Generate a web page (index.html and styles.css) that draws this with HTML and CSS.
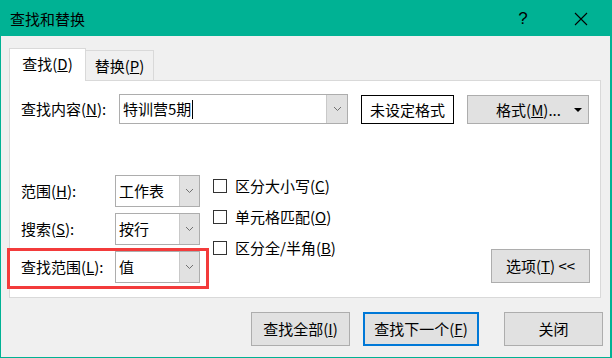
FILE: index.html
```html
<!DOCTYPE html>
<html lang="zh-CN">
<head>
<meta charset="utf-8">
<title>查找和替换</title>
<link rel="stylesheet" href="styles.css">
</head>
<body>
<div class="window">
  <div class="titlebar">
    <span class="title">查找和替换</span>
    <span class="tb-btn help">?</span>
    <span class="tb-btn close">
      <svg width="14" height="14" viewBox="0 0 14 14"><path d="M1 1 L13 13 M13 1 L1 13" stroke="#000" stroke-width="1.1" fill="none"/></svg>
    </span>
  </div>

  <div class="tabs">
    <div class="tab active">查找(<u>D</u>)</div>
    <div class="tab">替换(<u>P</u>)</div>
  </div>

  <div class="panel">
    <div class="row-find">
      <label class="lbl-find">查找内容(<u>N</u>):</label>
      <div class="combo combo-find">
        <span class="combo-text">特训营5期<span class="caret"></span></span>
        <span class="drop"><svg width="9" height="6" viewBox="0 0 9 6"><path d="M1 1 L4.5 4.5 L8 1" stroke="#707070" fill="none"/></svg></span>
      </div>
      <div class="fmt-box">未设定格式</div>
      <div class="btn fmt-btn"><span></span><span class="fmt-label">格式(<u>M</u>)...</span><span class="tri"></span></div>
    </div>

    <div class="options">
      <div class="opt-col">
        <div class="opt-row">
          <label class="lbl-opt">范围(<u>H</u>):</label>
          <div class="combo combo-sm">
            <span class="combo-text">工作表</span>
            <span class="drop"><svg width="9" height="6" viewBox="0 0 9 6"><path d="M1 1 L4.5 4.5 L8 1" stroke="#707070" fill="none"/></svg></span>
          </div>
        </div>
        <div class="opt-row">
          <label class="lbl-opt">搜索(<u>S</u>):</label>
          <div class="combo combo-sm">
            <span class="combo-text">按行</span>
            <span class="drop"><svg width="9" height="6" viewBox="0 0 9 6"><path d="M1 1 L4.5 4.5 L8 1" stroke="#707070" fill="none"/></svg></span>
          </div>
        </div>
        <div class="opt-row highlighted">
          <label class="lbl-opt">查找范围(<u>L</u>):</label>
          <div class="combo combo-sm">
            <span class="combo-text">值</span>
            <span class="drop"><svg width="9" height="6" viewBox="0 0 9 6"><path d="M1 1 L4.5 4.5 L8 1" stroke="#707070" fill="none"/></svg></span>
          </div>
        </div>
      </div>

      <div class="check-col">
        <div class="check-row"><span class="box"></span><span>区分大小写(<u>C</u>)</span></div>
        <div class="check-row"><span class="box"></span><span>单元格匹配(<u>O</u>)</span></div>
        <div class="check-row"><span class="box"></span><span>区分全/半角(<u>B</u>)</span></div>
      </div>

      <div class="btn opt-btn">选项(<u>T</u>) &lt;&lt;</div>
    </div>
  </div>

  <div class="actions">
    <div class="btn act-btn">查找全部(<u>I</u>)</div>
    <div class="btn act-btn primary">查找下一个(<u>F</u>)</div>
    <div class="btn act-btn close-btn">关闭</div>
  </div>
</div>
</body>
</html>
```

FILE: styles.css
```css
* { box-sizing: border-box; }
html, body { margin: 0; padding: 0; background: #f0f0f0; }
body {
  font-family: "Noto Sans CJK SC", "Noto Sans", sans-serif;
  font-size: 15px;
  color: #000;
}
u { text-decoration: underline; text-underline-offset: 1px; text-decoration-thickness: 1px; }

.window {
  width: 612px;
  height: 358px;
  border: 1px solid #00b294;
  border-right-width: 2px;
  background: #f0f0f0;
  display: flex;
  flex-direction: column;
}

.titlebar {
  height: 35px;
  background: #00b294;
  display: flex;
  align-items: center;
  padding-left: 9px;
  line-height: 20px;
}
.title { flex: 1; }
.tb-btn {
  width: 58px;
  height: 35px;
  display: flex;
  align-items: center;
  justify-content: center;
}
.help {
  font-family: "Liberation Sans", sans-serif;
  font-size: 17px;
}

.tabs {
  margin-top: 12px;
  margin-left: 8px;
  height: 32px;
  display: flex;
  align-items: flex-end;
}
.tab {
  height: 30px;
  padding: 0;
  border: 1px solid #d9d9d9;
  border-bottom: none;
  background: #f0f0f0;
  display: flex;
  align-items: center;
  justify-content: center;
  line-height: 18px;
  width: 68px;
  white-space: nowrap;
}
.tab.active {
  width: 77px;
  height: 33px;
  margin-bottom: -1px;
  background: #fff;
  position: relative;
  z-index: 1;
  padding-bottom: 2px;
}
.tab + .tab { border-left: none; }

.panel {
  margin-left: 8px;
  width: 592px;
  height: 218px;
  background: #fff;
  border: 1px solid #d9d9d9;
  padding: 13px 10px 0 11px;
  display: flex;
  flex-direction: column;
}

.row-find {
  display: flex;
  align-items: flex-end;
  height: 30px;
}
.lbl-find { width: 98px; line-height: 18px; align-self: center; }

.combo {
  display: flex;
  border: 1px solid #adadad;
  background: #fff;
}
.combo-text {
  flex: 1;
  display: flex;
  align-items: center;
  padding-left: 3px;
  line-height: 18px;
  white-space: nowrap;
}
.drop {
  width: 21px;
  background: #e1e1e1;
  border-left: 1px solid #c9c9c9;
  display: flex;
  align-items: center;
  justify-content: center;
}
.combo-find { width: 229px; height: 30px; }
.caret {
  display: inline-block;
  width: 1px;
  height: 19px;
  background: #000;
  margin-left: 1px;
}

.fmt-box {
  margin-left: 13px;
  width: 93px;
  height: 29px;
  border: 1px solid #000;
  background: #fff;
  display: flex;
  align-items: center;
  justify-content: center;
  line-height: 18px;
}

.btn {
  background: #e1e1e1;
  border: 1px solid #adadad;
  display: flex;
  align-items: center;
  justify-content: center;
  line-height: 18px;
  white-space: nowrap;
}
.fmt-btn {
  margin-left: 13px;
  width: 122px;
  height: 29px;
  display: grid;
  grid-template-columns: 1fr auto 1fr;
  align-items: center;
}
.fmt-label { padding-left: 1px; }
.tri {
  justify-self: end;
  margin-right: 6px;
  width: 0;
  height: 0;
  border-left: 4px solid transparent;
  border-right: 4px solid transparent;
  border-top: 4px solid #000;
}

.options {
  margin-top: 51px;
  display: flex;
  align-items: flex-end;
}
.opt-col {
  display: flex;
  flex-direction: column;
  gap: 6px;
}
.opt-row {
  display: flex;
  align-items: center;
  height: 32px;
}
.lbl-opt { width: 94px; line-height: 18px; white-space: nowrap; }
.combo-sm { width: 85px; height: 32px; }
.combo-sm .drop { border-right: 1px solid #adadad; margin-right: -1px; }

.highlighted { position: relative; }
.highlighted::after {
  content: "";
  position: absolute;
  left: -14px;
  top: -3px;
  right: -9px;
  bottom: -6px;
  border: 3px solid #f33b3b;
  pointer-events: none;
}

.check-col {
  margin-left: 13px;
  align-self: flex-start;
  padding-top: 4px;
  display: flex;
  flex-direction: column;
  gap: 17px;
}
.check-row {
  height: 14px;
  display: flex;
  align-items: center;
  line-height: 18px;
  white-space: nowrap;
}
.box {
  width: 14px;
  height: 14px;
  border: 1px solid #333;
  background: #fff;
  margin-right: 8px;
  flex: none;
}

.opt-btn {
  margin-left: auto;
  width: 99px;
  height: 34px;
}

.actions {
  margin-top: 14px;
  display: flex;
  justify-content: flex-end;
  padding-right: 7px;
  gap: 13px;
}
.act-btn { width: 99px; height: 34px; }
.act-btn.primary { width: 116px; border: 2px solid #0078d7; }
.act-btn.close-btn { margin-left: 12px; }
```
